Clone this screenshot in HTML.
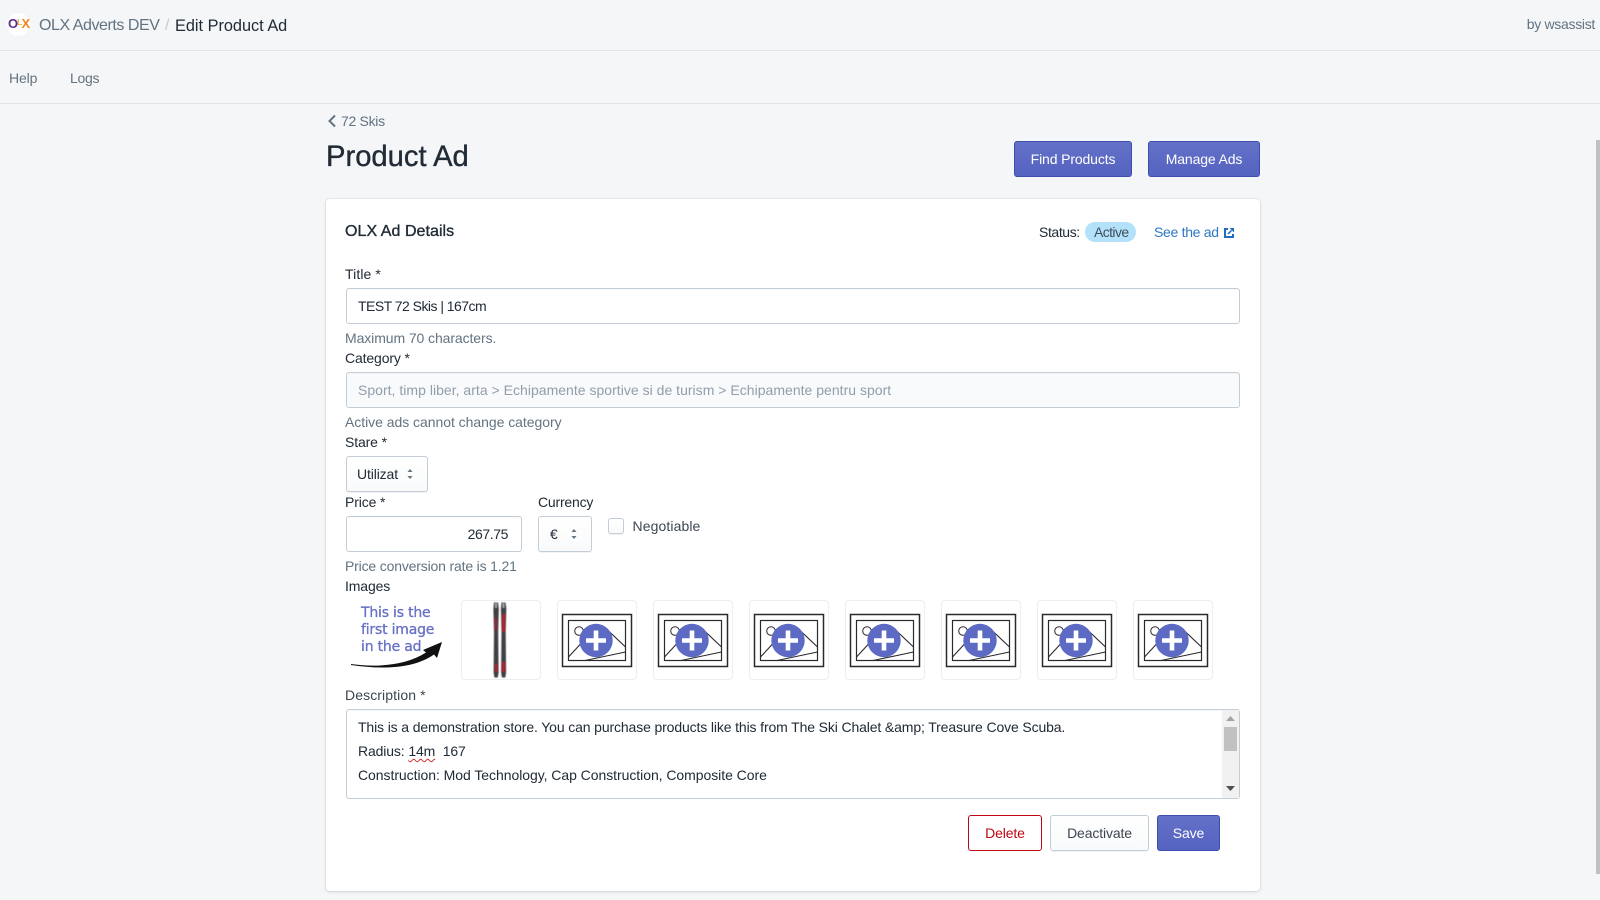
<!DOCTYPE html>
<html><head><meta charset="utf-8"><title>Edit Product Ad</title>
<style>
html,body{margin:0;padding:0;width:1600px;height:900px;overflow:hidden;background:#f4f6f8}
body{position:relative;font-family:"Liberation Sans",sans-serif;font-size:14px;letter-spacing:-.13px;color:#212b36}
.t{position:absolute;white-space:nowrap;line-height:20px;height:20px}
.g{color:#637381}
.b{position:absolute;box-sizing:border-box;border-radius:3px}
.inp{background:#fff;border:1px solid #c4cdd5;box-shadow:inset 0 1px 0 rgba(99,115,129,.05)}
.sel{background:linear-gradient(#fff,#f9fafb);border:1px solid #c4cdd5;box-shadow:0 1px 0 rgba(22,29,37,.05)}
.pri{background:linear-gradient(#6371c7,#5563c1);border:1px solid #3f4eae;color:#fff;text-align:center;line-height:35px}
.tile{position:absolute;top:600px;width:80px;height:80px;box-sizing:border-box;border:1px solid #eceff2;border-radius:4px;background:#fff}
svg{position:absolute;overflow:visible}
</style></head><body>
<!-- header -->
<div class="b" style="left:0;top:50px;width:1600px;height:1px;background:#dfe3e8;border-radius:0"></div>
<div class="b" style="left:0;top:103px;width:1600px;height:1px;background:#dfe3e8;border-radius:0"></div>
<div class="b" style="left:7px;top:12.500px;width:23px;height:23px;border-radius:50%;background:#fff"></div>
<span class="t" style="left:8px;top:14px;font-size:13px;font-weight:bold;letter-spacing:-1px"><span style="color:#5b2d90">O</span><span style="color:#e8b32a;font-size:8px;position:relative;top:-3px;letter-spacing:-.5px">L</span><span style="color:#f58220">X</span></span>
<span class="t g" style="left:39px;top:15.500px;font-size:16px;letter-spacing:-.45px">OLX Adverts DEV</span>
<span class="t" style="left:165px;top:15.500px;font-size:16px;color:#c4cdd5">/</span>
<span class="t" style="left:175px;top:15.500px;font-size:16.300px;letter-spacing:0">Edit Product Ad</span>
<span class="t g" style="right:5px;top:14px;letter-spacing:-.3px">by wsassist</span>
<span class="t g" style="left:9px;top:68px">Help</span>
<span class="t g" style="left:70px;top:68px;letter-spacing:-.3px">Logs</span>
<!-- page title -->
<svg style="left:327px;top:114px" width="10" height="14" viewBox="0 0 10 14"><path d="M8 1.500 2.500 7 8 12.500" fill="none" stroke="#637381" stroke-width="2"/></svg>
<span class="t g" style="left:341px;top:111px;letter-spacing:-.3px">72 Skis</span>
<span class="t" style="left:326px;top:147px;font-size:29.200px;line-height:20px;letter-spacing:0;-webkit-text-stroke:.35px #212b36">Product Ad</span>
<div class="b pri" style="left:1014px;top:141px;width:118px;height:36px">Find Products</div>
<div class="b pri" style="left:1148px;top:141px;width:112px;height:36px">Manage Ads</div>
<!-- card -->
<div class="b" style="left:326px;top:199px;width:934px;height:692px;background:#fff;border-radius:4px;box-shadow:0 0 0 1px rgba(63,63,68,.05),0 1px 3px 0 rgba(63,63,68,.15)"></div>
<span class="t" style="left:345px;top:222px;font-size:16px;letter-spacing:.05px;-webkit-text-stroke:.35px #212b36">OLX Ad Details</span>
<span class="t" style="left:1039px;top:222px;letter-spacing:-.4px">Status:</span>
<div class="b" style="left:1085px;top:222px;width:51px;height:20px;border-radius:10px;background:#b4e1fa"></div>
<span class="t" style="left:1094px;top:222px;color:#3c4f60;letter-spacing:-.6px">Active</span>
<span class="t" style="left:1154px;top:222px;color:#2b78c5;letter-spacing:-.3px">See the ad</span>
<svg style="left:1224px;top:228px" width="10" height="10" viewBox="0 0 10 10"><path d="M4 1H1v8h8V6" fill="none" stroke="#1f6fc0" stroke-width="2"/><path d="M5.500 0H10v4.500zM3.500 5.200 7 2l1 1-3.400 3.500z" fill="#1f6fc0"/></svg>

<span class="t" style="left:345px;top:264px;letter-spacing:.1px">Title *</span>
<div class="b inp" style="left:346px;top:288px;width:894px;height:36px"></div>
<span class="t" style="left:358px;top:296px;letter-spacing:-.53px">TEST 72 Skis | 167cm</span>
<span class="t g" style="left:345px;top:328px;letter-spacing:-.09px">Maximum 70 characters.</span>
<span class="t" style="left:345px;top:348px">Category *</span>
<div class="b inp" style="left:346px;top:372px;width:894px;height:36px;background:#f9fafb"></div>
<span class="t" style="left:358px;top:380px;color:#919eab;letter-spacing:.02px">Sport, timp liber, arta &gt; Echipamente sportive si de turism &gt; Echipamente pentru sport</span>
<span class="t g" style="left:345px;top:412px;letter-spacing:-.04px">Active ads cannot change category</span>
<span class="t" style="left:345px;top:432px">Stare *</span>
<div class="b sel" style="left:346px;top:456px;width:82px;height:36px"></div>
<span class="t" style="left:357px;top:464px">Utilizat</span>
<svg style="left:406px;top:468px" width="8" height="12" viewBox="0 0 8 12"><path d="M4 1 6.500 4h-5zM4 11 1.500 8h5z" fill="#637381"/></svg>
<span class="t" style="left:345px;top:492px">Price *</span>
<div class="b inp" style="left:346px;top:516px;width:176px;height:36px"></div>
<span class="t" style="right:1092px;top:524px;letter-spacing:-.4px">267.75</span>
<span class="t" style="left:538px;top:492px;letter-spacing:-.2px">Currency</span>
<div class="b sel" style="left:538px;top:516px;width:54px;height:36px"></div>
<span class="t" style="left:550px;top:524px">€</span>
<svg style="left:570px;top:528px" width="8" height="12" viewBox="0 0 8 12"><path d="M4 1 6.500 4h-5zM4 11 1.500 8h5z" fill="#637381"/></svg>
<div class="b sel" style="left:608px;top:518px;width:16px;height:16px"></div>
<span class="t" style="left:632.500px;top:516px;color:#3c4650;letter-spacing:.1px">Negotiable</span>
<span class="t g" style="left:345px;top:556px;letter-spacing:-.17px">Price conversion rate is 1.21</span>
<span class="t" style="left:345px;top:576px">Images</span>
<!-- first image note -->
<span class="t" style="left:361px;top:605px;font-family:'DejaVu Sans',sans-serif;font-size:14px;line-height:17px;color:#6670c4;height:auto;letter-spacing:-.2px;-webkit-text-stroke:.3px #6670c4">This is the<br>first image<br>in the ad</span>
<svg style="left:350px;top:640px" width="95" height="32" viewBox="0 0 95 32"><path d="M1 24C25 27.500 55 26 76 12.500L73 10 92 2 87 18 84 14.500C62 30 28 29 1 25Z" fill="#111"/></svg>
<!-- tiles -->
<div class="tile" style="left:461px"></div>
<svg style="left:461px;top:600px" width="80" height="80" viewBox="0 0 80 80">
<g style="filter:blur(.5px)">
<path d="M33 2.500h4l.8 6-.6 24 .4 40-.8 5h-3.400l-.8-5 .4-40-.6-24z" fill="#3f3f45"/><path d="M40.500 2.500h4l.8 6-.6 24 .4 40-.8 5h-3.400l-.8-5 .4-40-.6-24z" fill="#3f3f45"/>
<path d="M34 18h1.800v12H34zM41 14h3v18h-3zM34 64h2.500v8H34zM41 62h3v10h-3z" fill="#b5202f"/><path d="M34 3h2v5h-2zM41.500 3h2v5h-2z" fill="#a9a9ad"/></g></svg>
<div class="tile" style="left:557px"></div><div class="tile" style="left:653px"></div><div class="tile" style="left:749px"></div><div class="tile" style="left:845px"></div><div class="tile" style="left:941px"></div><div class="tile" style="left:1037px"></div><div class="tile" style="left:1133px"></div>
<svg width="0" height="0" style="position:absolute"><defs><g id="ph" fill="none" stroke="#2a2a2e">
<rect x="5.500" y="14.500" width="69" height="52" stroke-width="1.500"/><rect x="11.500" y="20.500" width="57" height="40" stroke-width="1.200"/>
<circle cx="22" cy="31" r="4.300" stroke-width="1"/><path d="M11.500 57 30 37M50 29.500 68.500 47M28 60.500 68.500 52" stroke-width="1.100"/>
<circle cx="39" cy="40.500" r="16.700" fill="#5c6ac4" stroke="none"/><path d="M39 30.500v20M29 40.500h20" stroke="#fff" stroke-width="4.600"/></g></defs></svg>
<svg style="left:557px;top:600px" width="80" height="80"><use href="#ph"/></svg>
<svg style="left:653px;top:600px" width="80" height="80"><use href="#ph"/></svg>
<svg style="left:749px;top:600px" width="80" height="80"><use href="#ph"/></svg>
<svg style="left:845px;top:600px" width="80" height="80"><use href="#ph"/></svg>
<svg style="left:941px;top:600px" width="80" height="80"><use href="#ph"/></svg>
<svg style="left:1037px;top:600px" width="80" height="80"><use href="#ph"/></svg>
<svg style="left:1133px;top:600px" width="80" height="80"><use href="#ph"/></svg>
<!-- description -->
<span class="t" style="left:345px;top:685px;color:#3c4650;letter-spacing:.1px">Description *</span>
<div class="b inp" style="left:346px;top:709px;width:894px;height:90px"></div>
<span class="t" style="left:358px;top:717px">This is a demonstration store. You can purchase products like this from The Ski Chalet &amp;amp; Treasure Cove Scuba.</span>
<span class="t" style="left:358px;top:741px">Radius: <span style="text-decoration:underline wavy #d0302f 1px;text-underline-offset:2px">14m</span>&nbsp; 167</span>
<span class="t" style="left:358px;top:765px;letter-spacing:-.05px">Construction: Mod Technology, Cap Construction, Composite Core</span>
<div class="b" style="left:1222px;top:710px;width:17px;height:88px;background:#f1f1f1;border-radius:0"></div>
<div class="b" style="left:1224px;top:727px;width:13px;height:24px;background:#c1c1c1;border-radius:0"></div>
<svg style="left:1226px;top:716px" width="9" height="6"><path d="M4.500 0 9 5H0z" fill="#a3a3a3"/></svg>
<svg style="left:1226px;top:786px" width="9" height="6"><path d="M0 0H9L4.500 5z" fill="#505050"/></svg>
<!-- buttons -->
<div class="b" style="left:968px;top:815px;width:74px;height:36px;background:#fff;border:1px solid #bf0711;color:#bf0711;text-align:center;line-height:35px">Delete</div>
<div class="b sel" style="left:1050px;top:815px;width:99px;height:36px;text-align:center;line-height:35px;color:#3c4650">Deactivate</div>
<div class="b pri" style="left:1157px;top:815px;width:63px;height:36px">Save</div>
<!-- page scrollbar -->
<div class="b" style="left:1596px;top:140px;width:4px;height:734px;background:#c1c1c1;border-radius:0"></div>
</body></html>
